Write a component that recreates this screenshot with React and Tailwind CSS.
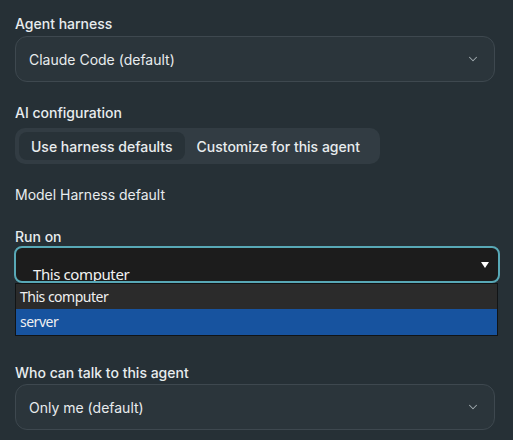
import { ChevronDown } from 'lucide-react';

const Label = ({ children, className = '' }) => (
  <div className={`text-[14px] leading-5 font-medium text-[#e8ecee] ${className}`}>{children}</div>
);

const SelectBox = ({ value }) => (
  <div className="h-[46px] rounded-xl border border-[#3e484f] bg-[#2b353b] flex items-center justify-between pl-[13px] pr-[14px]">
    <span className="text-[14px] text-[#e8ecee]">{value}</span>
    <ChevronDown size={14} strokeWidth={1.75} className="text-[#a3acb1]" />
  </div>
);

export default function App() {
  return (
    <div
      className="min-h-screen bg-[#263036] px-[15px] pt-[14px] pb-4"
      style={{ fontFamily: 'Inter, "Noto Sans", sans-serif' }}
    >
      <Label>Agent harness</Label>
      <div className="mt-[2px] mr-[3px]">
        <SelectBox value="Claude Code (default)" />
      </div>

      <Label className="mt-[21px]">AI configuration</Label>
      <div className="mt-[5px] inline-flex items-center rounded-[10px] bg-[#323c43] p-1 gap-3 h-9">
        <button className="h-7 px-3 rounded-lg bg-[#283238] text-[14px] font-medium text-[#e8ecee]">
          Use harness defaults
        </button>
        <button className="h-7 pr-4 text-[14px] font-medium text-[#e8ecee]">
          Customize for this agent
        </button>
      </div>

      <div className="mt-[21px] text-[14px] leading-5 text-[#e8ecee]">Model Harness default</div>

      <Label className="mt-[22px]">Run on</Label>
      <div className="-mt-[1px] -ml-[1px] mr-[-2px] relative">
        <div className="h-[37px] rounded-lg border-2 border-[#58a8b6] bg-[#1c1c1c] overflow-hidden relative">
          <div
            className="pl-[17px] pt-[14px] text-[15px] leading-6 tracking-[-0.4px] text-[#f2f2f2]"
            style={{ fontFamily: '"Noto Sans", "Open Sans", sans-serif' }}
          >
            This computer
          </div>
          <svg className="absolute right-[9px] top-[14px]" width="8" height="6" viewBox="0 0 8 6">
            <path d="M0 0H8L4 6Z" fill="#ffffff" />
          </svg>
        </div>
        <div
          className="ml-[1px] mr-[2px] border border-[#111416] text-[14px] leading-[25px] tracking-[-0.5px] text-[#f0f0f0]"
          style={{ fontFamily: '"Noto Sans", "Open Sans", sans-serif' }}
        >
          <div className="bg-[#2b2b2b] pl-1 h-[25px]">This computer</div>
          <div className="bg-[#17539f] pl-1 h-[26px]">server</div>
        </div>
      </div>

      <Label className="mt-[27px]">Who can talk to this agent</Label>
      <div className="mt-[1px] mr-[3px]">
        <SelectBox value="Only me (default)" />
      </div>
    </div>
  );
}
